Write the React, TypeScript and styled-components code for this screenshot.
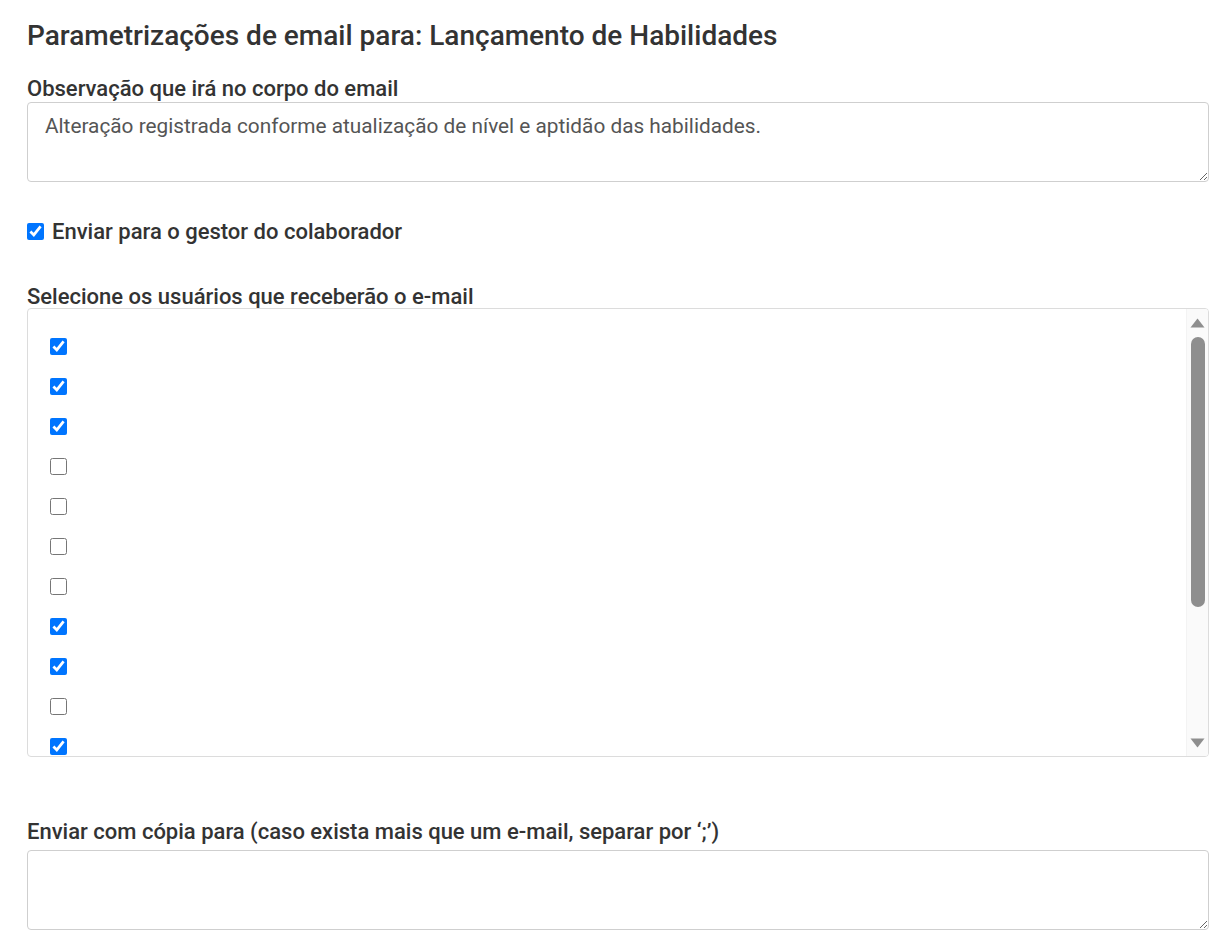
import styled, { createGlobalStyle } from 'styled-components';

const GlobalStyle = createGlobalStyle`
  html, body {
    margin: 0;
    padding: 0;
    background: #fff;
  }
  body {
    font-family: Roboto, "Liberation Sans", Arial, sans-serif;
    color: #333;
  }
`;

const Page = styled.div`
  padding: 20px 14px 0 27px;
  display: flex;
  flex-direction: column;
`;

const Title = styled.h2`
  margin: 0 0 26px;
  font-size: 28px;
  font-weight: 500;
  line-height: 32px;
  color: #333;
`;

const Label = styled.label<{ $gap?: number }>`
  display: block;
  font-size: 22px;
  font-weight: 500;
  line-height: 22px;
  color: #333;
  margin-bottom: ${(p) => p.$gap ?? 2}px;
`;

const TextArea = styled.textarea`
  box-sizing: border-box;
  width: 100%;
  height: 80px;
  border: 1px solid #cfcfcf;
  border-radius: 4px;
  padding: 11px 17px;
  font-family: Roboto, "Liberation Sans", Arial, sans-serif;
  font-size: 20.8px;
  line-height: 24px;
  color: #555;
  resize: vertical;
  outline: none;
`;

const CheckRow = styled.label`
  display: flex;
  align-items: center;
  gap: 8px;
  height: 24px;
  margin: 37px 0 43px;
  font-size: 22px;
  font-weight: 500;
  color: #333;
`;

const Box = styled.input`
  width: 17px;
  height: 17px;
  margin: 0;
  flex-shrink: 0;
  accent-color: #0075ff;
`;

const ListBox = styled.div`
  box-sizing: border-box;
  height: 449px;
  border: 1px solid #dcdcdc;
  border-radius: 4px;
  overflow: hidden;
  display: flex;
`;

const List = styled.div`
  flex: 1;
  overflow-y: auto;
  padding: 29px 0 0 22px;
  display: flex;
  flex-direction: column;
  gap: 23px;
  scrollbar-width: none;

  &::-webkit-scrollbar {
    display: none;
  }
`;

const UserRow = styled.label`
  display: flex;
  align-items: center;
  height: 17px;
  flex-shrink: 0;
`;

const ScrollBar = styled.div`
  width: 21px;
  flex-shrink: 0;
  background: #fafafa;
  border-left: 1px solid #f3f3f3;
  display: flex;
  flex-direction: column;
  align-items: center;
`;

const Arrow = styled.button`
  width: 100%;
  height: 27px;
  border: 0;
  padding: 0;
  background: transparent;
  display: flex;
  align-items: center;
  justify-content: center;
  flex-shrink: 0;
`;

const Track = styled.div`
  flex: 1;
  width: 100%;
  display: flex;
  justify-content: center;
`;

const Thumb = styled.div`
  width: 14px;
  height: 270px;
  margin-top: 1px;
  border-radius: 7px;
  background: #8e8e8e;
`;

const Section = styled.div`
  margin-top: 64px;
`;

const users = [
  true, true, true, false, false, false, false, true, true, false, true,
  false, true, false, true, true,
];

const Triangle = ({ down }: { down?: boolean }) => (
  <svg width="15" height="10" viewBox="0 0 15 10">
    <polygon points={down ? '0.5,0.5 14.5,0.5 7.5,9.5' : '0.5,9.5 14.5,9.5 7.5,0.5'} fill="#8e8e8e" />
  </svg>
);

export default function App() {
  return (
    <>
      <GlobalStyle />
      <Page>
        <Title>Parametrizações de email para: Lançamento de Habilidades</Title>
        <Label>Observação que irá no corpo do email</Label>
        <TextArea defaultValue="Alteração registrada conforme atualização de nível e aptidão das habilidades." />

        <CheckRow>
          <Box type="checkbox" defaultChecked />
          Enviar para o gestor do colaborador
        </CheckRow>

        <Label $gap={0}>Selecione os usuários que receberão o e-mail</Label>
        <ListBox>
          <List>
            {users.map((checked, i) => (
              <UserRow key={i}>
                <Box type="checkbox" defaultChecked={checked} />
              </UserRow>
            ))}
          </List>
          <ScrollBar>
            <Arrow aria-label="Rolar para cima">
              <Triangle />
            </Arrow>
            <Track>
              <Thumb />
            </Track>
            <Arrow aria-label="Rolar para baixo">
              <Triangle down />
            </Arrow>
          </ScrollBar>
        </ListBox>

        <Section>
          <Label $gap={7}>Enviar com cópia para (caso exista mais que um e-mail, separar por ‘;’)</Label>
          <TextArea />
        </Section>
      </Page>
    </>
  );
}
